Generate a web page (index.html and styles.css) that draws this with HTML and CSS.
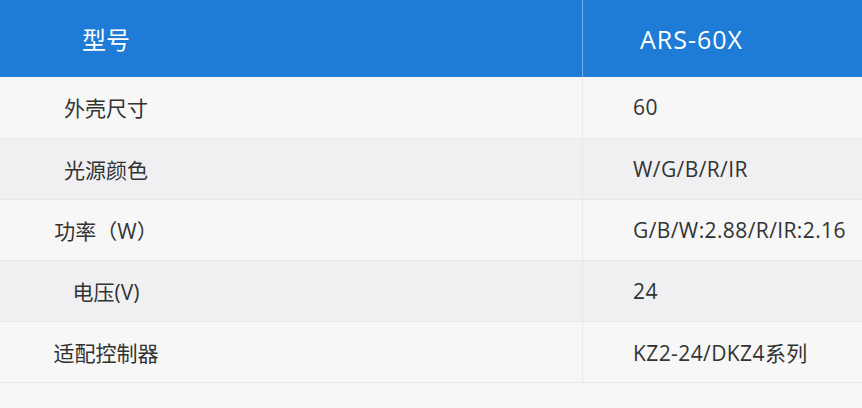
FILE: index.html
```html
<!DOCTYPE html>
<html lang="zh">
<head>
<meta charset="utf-8">
<link rel="stylesheet" href="styles.css">
</head>
<body>
<table class="spec">
  <thead>
    <tr>
      <th class="key"><span class="label">型号</span></th>
      <th class="val head-val">ARS-60X</th>
    </tr>
  </thead>
  <tbody>
    <tr class="odd"><td class="key"><span class="label">外壳尺寸</span></td><td class="val">60</td></tr>
    <tr class="even"><td class="key"><span class="label">光源颜色</span></td><td class="val">W/G/B/R/IR</td></tr>
    <tr class="odd"><td class="key"><span class="label">功率（W）</span></td><td class="val">G/B/W:2.88/R/IR:2.16</td></tr>
    <tr class="even"><td class="key"><span class="label">电压(V)</span></td><td class="val">24</td></tr>
    <tr class="odd"><td class="key"><span class="label">适配控制器</span></td><td class="val">KZ2-24/DKZ4系列</td></tr>
  </tbody>
</table>
</body>
</html>
```
FILE: styles.css
```css
html, body {
  margin: 0;
  padding: 0;
  background: #f7f7f7;
}
body {
  font-family: "Open Sans", "Noto Sans CJK SC", sans-serif;
  color: #333;
}
.spec {
  width: 862px;
  border-collapse: collapse;
  table-layout: fixed;
}
.spec th, .spec td {
  padding: 0;
  font-weight: normal;
  vertical-align: middle;
}
.spec thead tr {
  background: #1e7bd6;
  height: 77px;
}
.spec th {
  color: #fff;
  font-size: 24px;
}
.spec th.key {
  width: 582px;
  border-right: 1px solid #76aee6;
  text-align: left;
}
.spec td.key {
  width: 582px;
  border-right: 1px solid #e8e8e8;
  text-align: left;
}
.label {
  display: inline-block;
  width: 212px;
  text-align: center;
}
.spec th.head-val {
  text-align: left;
  padding-left: 57px;
  font-size: 25px;
  letter-spacing: 1px;
}
.spec tbody tr {
  height: 61px;
  border-bottom: 1px solid #e8e8ea;
}
.spec tbody td {
  font-size: 21px;
}
.spec td.val {
  padding-left: 50px;
  text-align: left;
  letter-spacing: 0.4px;
}
.odd { background: #f7f7f7; }
.even { background: #f0f0f2; }
```
